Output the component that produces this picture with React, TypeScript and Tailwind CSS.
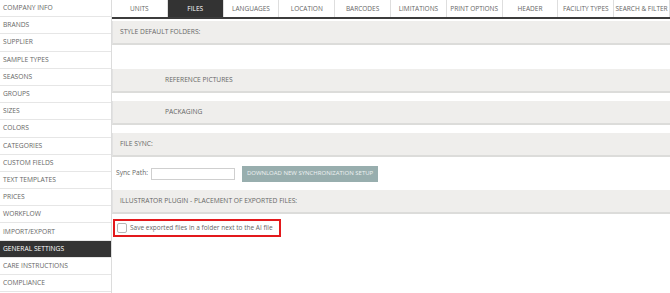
import React from "react";

const menu = [
  "COMPANY INFO",
  "BRANDS",
  "SUPPLIER",
  "SAMPLE TYPES",
  "SEASONS",
  "GROUPS",
  "SIZES",
  "COLORS",
  "CATEGORIES",
  "CUSTOM FIELDS",
  "TEXT TEMPLATES",
  "PRICES",
  "WORKFLOW",
  "IMPORT/EXPORT",
  "GENERAL SETTINGS",
  "CARE INSTRUCTIONS",
  "COMPLIANCE",
];

const tabs = [
  "UNITS",
  "FILES",
  "LANGUAGES",
  "LOCATION",
  "BARCODES",
  "LIMITATIONS",
  "PRINT OPTIONS",
  "HEADER",
  "FACILITY TYPES",
  "SEARCH & FILTER",
];

const Bar: React.FC<{ label: string; indent?: boolean }> = ({ label, indent }) => (
  <div
    className={`h-[24px] flex items-center bg-[#efeeec] border-l border-[#e2e2e2] border-b-2 border-b-[#dcdcda] text-[6.7px] text-[#666] whitespace-nowrap ${
      indent ? "pl-[52px]" : "pl-[7px]"
    }`}
  >
    {label}
  </div>
);

const App: React.FC = () => {
  return (
    <div
      className="flex w-[670px] h-[293px] overflow-hidden bg-white"
      style={{ fontFamily: '"Open Sans", "Liberation Sans", sans-serif' }}
    >
      {/* sidebar */}
      <div className="w-[112px] shrink-0 border-r border-[#dcdcdc] flex flex-col">
        {menu.map((m) => (
          <div
            key={m}
            className={`h-[17.2px] shrink-0 flex items-center pl-[3px] text-[6.7px] whitespace-nowrap border-b border-[#e6e6e6] ${
              m === "GENERAL SETTINGS" ? "bg-[#333] text-white" : "text-[#666]"
            }`}
          >
            {m}
          </div>
        ))}
      </div>

      {/* main */}
      <div className="flex-1 flex flex-col">
        <div className="h-[19px] flex border-b-2 border-[#3c3c3c]">
          {tabs.map((t) => (
            <div
              key={t}
              className={`flex-1 flex items-center justify-center pt-[1px] text-[6.5px] whitespace-nowrap border-r border-[#dedede] ${
                t === "FILES" ? "bg-[#333] text-white" : "text-[#666]"
              }`}
            >
              {t}
            </div>
          ))}
        </div>

        <div className="mt-[2px] flex flex-col">
          <Bar label="STYLE DEFAULT FOLDERS:" />
          <div className="h-[24px]" />
          <Bar label="REFERENCE PICTURES" indent />
          <div className="h-[8px]" />
          <Bar label="PACKAGING" indent />
          <div className="h-[8px]" />
          <Bar label="FILE SYNC:" />

          <div className="h-[33px] flex items-center pl-[4px] text-[6.7px] text-[#666]">
            <span className="whitespace-nowrap">Sync Path:</span>
            <input
              type="text"
              className="ml-[3px] w-[84px] h-[12px] border border-[#cfcfcf] bg-white outline-none"
            />
            <button className="ml-[7px] w-[136px] h-[16px] bg-[#98aeae] text-[#eef2f2] text-[6px] whitespace-nowrap">
              DOWNLOAD NEW SYNCHRONIZATION SETUP
            </button>
          </div>

          <Bar label="ILLUSTRATOR PLUGIN - PLACEMENT OF EXPORTED FILES:" />

          <div className="pl-[1px] pt-[5px]">
            <div className="w-[168px] h-[18px] border-2 border-[#e3191c] flex items-center pl-[2px] text-[6.5px] text-[#666] whitespace-nowrap">
              <span className="w-[10px] h-[10px] shrink-0 border border-[#b5b5b5] rounded-[2px] bg-white mr-[3px]" />
              Save exported files in a folder next to the AI file
            </div>
          </div>
        </div>
      </div>
    </div>
  );
};

export default App;
